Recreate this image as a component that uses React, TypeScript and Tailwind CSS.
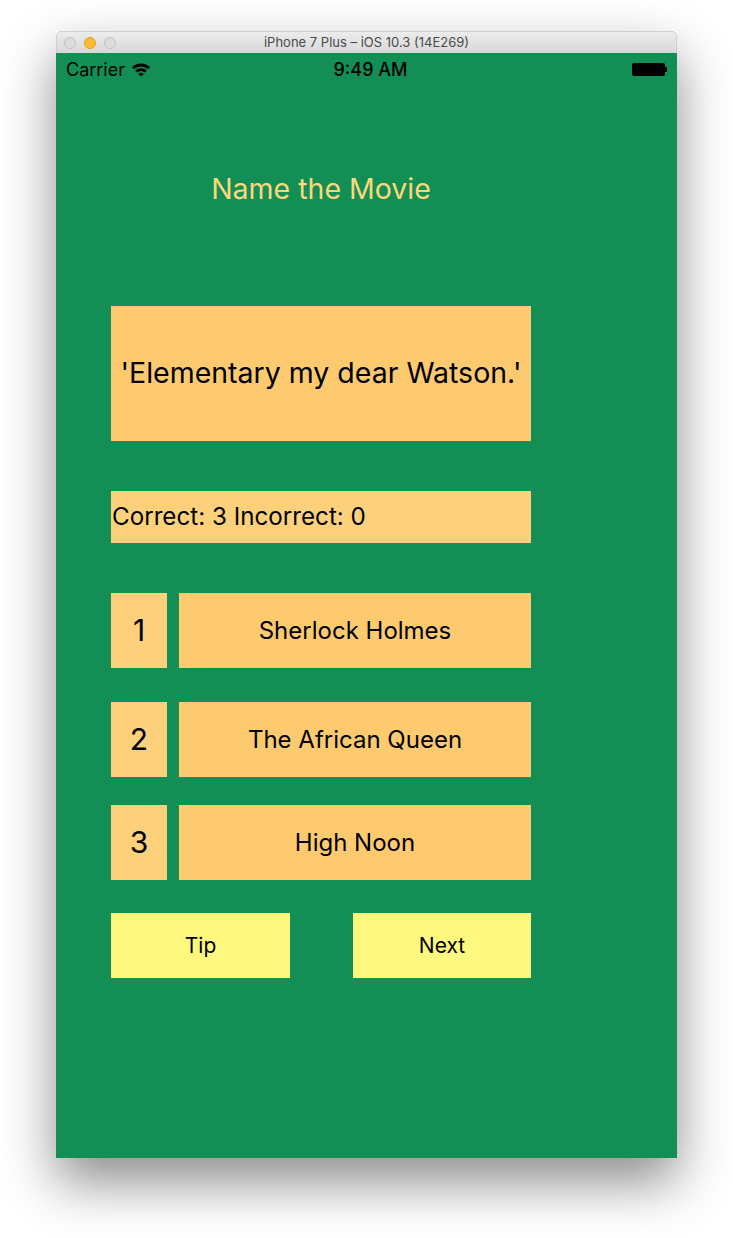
const font = { fontFamily: "Inter, 'Noto Sans', sans-serif" };

function StatusBar() {
  return (
    <div className="relative flex h-[32px] items-center px-[10px] text-[18px] text-black">
      <div className="flex items-center gap-[6px]">
        <span>Carrier</span>
        <svg width="20" height="15" viewBox="0 0 20 15">
          <path d="M1 5.2 A13 13 0 0 1 19 5.2 L17 7.3 A10 10 0 0 0 3 7.3 Z" fill="black" />
          <path d="M4.2 8.6 A8.5 8.5 0 0 1 15.8 8.6 L13.8 10.6 A5.7 5.7 0 0 0 6.2 10.6 Z" fill="black" />
          <path d="M7.4 12 A3.8 3.8 0 0 1 12.6 12 L10 14.6 Z" fill="black" />
        </svg>
      </div>
      <div className="pointer-events-none absolute left-[8px] right-0 text-center font-medium">9:49 AM</div>
      <div className="ml-auto flex items-center">
        <div className="h-[13px] w-[33px] rounded-[2px] bg-black" />
        <div className="h-[5px] w-[2px] rounded-r-[1px] bg-black" />
      </div>
    </div>
  );
}

function AnswerRow({ n, title, mt }: { n: number; title: string; mt: string }) {
  return (
    <div className={`flex h-[75px] gap-[12px] ${mt}`}>
      <div className="flex w-[56px] items-center justify-center bg-[#fdd17c] text-[30px]">{n}</div>
      <div className="flex flex-1 items-center justify-center bg-[#fdca70] text-[24px]">{title}</div>
    </div>
  );
}

export default function App() {
  return (
    <div className="h-[1238px] w-[733px] overflow-hidden bg-white pt-[31px]" style={font}>
      <div className="ml-[56px] w-[621px] shadow-[0_24px_50px_rgba(0,0,0,0.45)]">
        {/* title bar */}
        <div className="relative flex h-[22px] items-center rounded-t-[5px] border border-b-0 border-[#cfcfcf] bg-gradient-to-b from-[#ececec] to-[#d8d8d8] px-[7px]">
          <div className="flex gap-[8px]">
            <div className="h-[12px] w-[12px] rounded-full border border-[#c4c4c4] bg-[#dcdcdc]" />
            <div className="h-[12px] w-[12px] rounded-full border border-[#dfa023] bg-[#f8bb31]" />
            <div className="h-[12px] w-[12px] rounded-full border border-[#c4c4c4] bg-[#dcdcdc]" />
          </div>
          <div className="absolute left-0 right-0 text-center text-[13px] text-[#4a4a4a]">
            iPhone 7 Plus – iOS 10.3 (14E269)
          </div>
        </div>

        {/* screen */}
        <div className="h-[1105px] bg-[#138e55]">
          <StatusBar />
          <div className="ml-[55px] flex w-[420px] flex-col text-black">
            <div className="mt-[87px] text-center text-[28.5px] leading-[34px] text-[#fcd77c]">Name the Movie</div>
            <div className="mt-[100px] flex h-[135px] items-center justify-center bg-[#fdca70] text-[28.5px]">
              'Elementary my dear Watson.'
            </div>
            <div className="mt-[50px] flex h-[52px] items-center bg-[#fdd17c] pl-[1px] text-[24.2px]">
              Correct: 3 Incorrect: 0
            </div>
            <AnswerRow n={1} title="Sherlock Holmes" mt="mt-[50px]" />
            <AnswerRow n={2} title="The African Queen" mt="mt-[34px]" />
            <AnswerRow n={3} title="High Noon" mt="mt-[28px]" />
            <div className="mt-[33px] flex h-[65px] justify-between">
              <div className="flex w-[179px] items-center justify-center bg-[#fef87f] text-[21px]">Tip</div>
              <div className="flex w-[178px] items-center justify-center bg-[#fef87f] text-[21px]">Next</div>
            </div>
          </div>
        </div>
      </div>
    </div>
  );
}
